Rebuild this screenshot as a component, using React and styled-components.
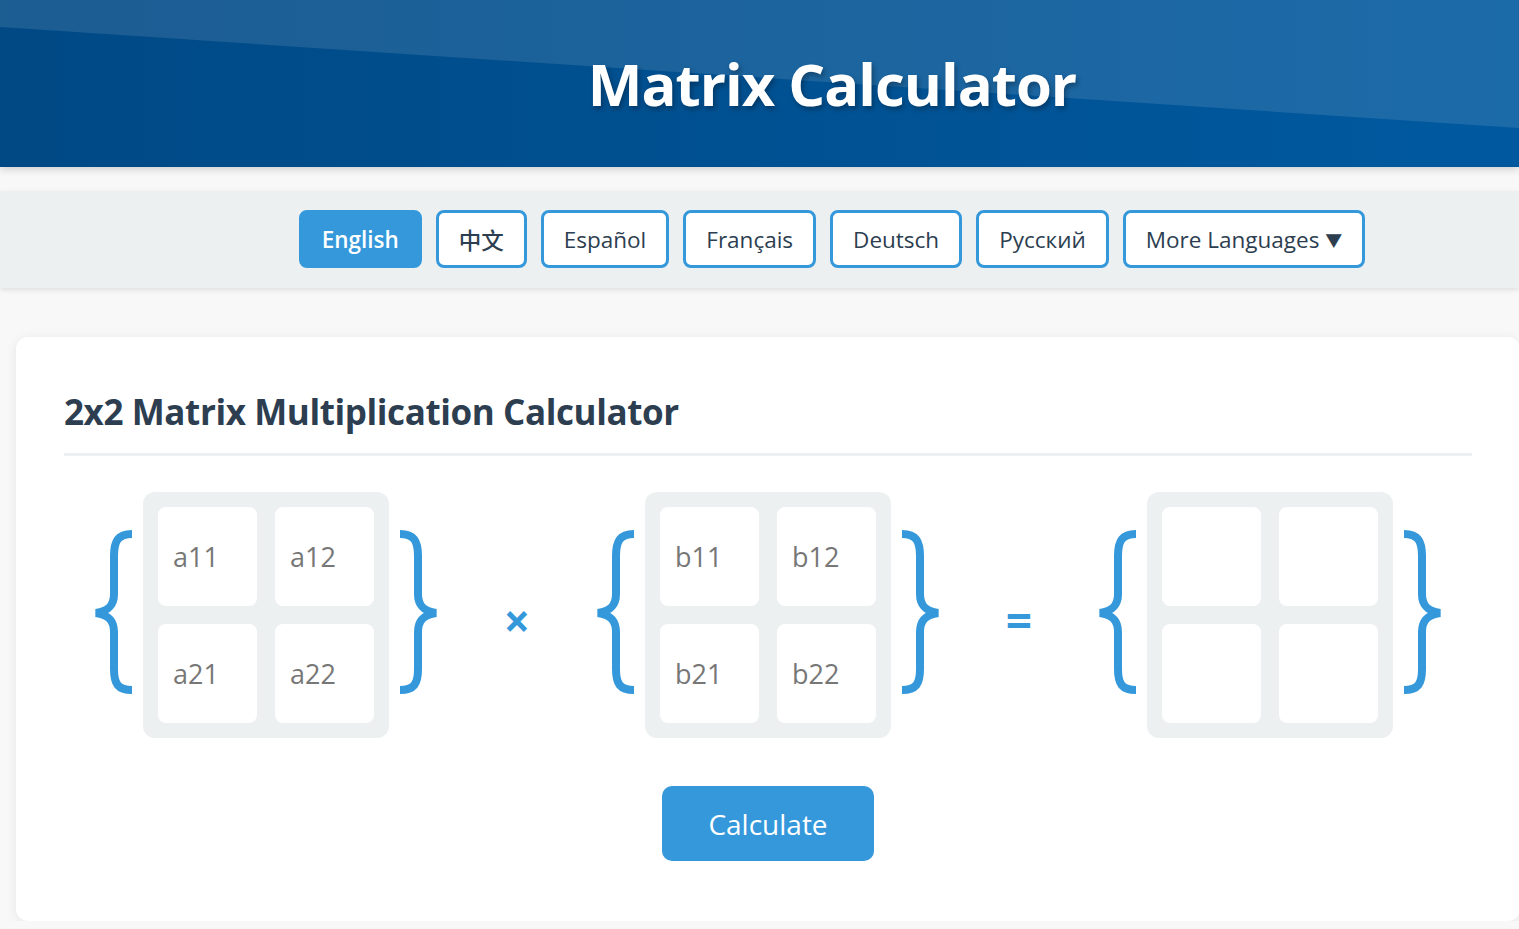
import styled, { createGlobalStyle } from "styled-components";

const GlobalStyle = createGlobalStyle`
    html, body {
        margin: 0;
        padding: 0;
        background: #f8f8f8;
        overflow-x: hidden;
        font-family: 'Open Sans', 'Noto Sans', 'Noto Sans CJK SC', sans-serif;
    }
    * { box-sizing: border-box; }
`

const languages = ["English", "中文", "Español", "Français", "Deutsch", "Русский"];

export default function App(){
    return(
        <>
            <GlobalStyle />
            <Header>
                <HeaderShade />
                <Title>Matrix Calculator</Title>
            </Header>
            <LangBar>
                {languages.map((lang, i) => (
                    <LangButton key={lang} active={i === 0}>{lang}</LangButton>
                ))}
                <LangButton>More Languages <Arrow>▼</Arrow></LangButton>
            </LangBar>
            <Card>
                <CardTitle>2x2 Matrix Multiplication Calculator</CardTitle>
                <Equation>
                    <Matrix cells={["a11", "a12", "a21", "a22"]} />
                    <Operator>×</Operator>
                    <Matrix cells={["b11", "b12", "b21", "b22"]} />
                    <Operator>=</Operator>
                    <Matrix cells={["", "", "", ""]} readOnly />
                </Equation>
                <ButtonRow>
                    <CalcButton>Calculate</CalcButton>
                </ButtonRow>
            </Card>
        </>
    );
}

function Brace({ flip }){
    return(
        <BraceSvg viewBox="0 0 40 168" flip={flip}>
            <path d="M39 6 C25 6 21 13 21 28 L21 66 C21 78 15 83 3 85 C15 87 21 92 21 104 L21 141 C21 156 25 162 39 162" />
        </BraceSvg>
    );
}

function Matrix({ cells, readOnly }){
    return(
        <MatrixGroup>
            <Brace />
            <Grid>
                {cells.map((c, i) => (
                    <Cell key={i} placeholder={c} readOnly={readOnly} />
                ))}
            </Grid>
            <Brace flip />
        </MatrixGroup>
    );
}

const Header = styled.header`
    position: relative;
    height: 167px;
    background: linear-gradient(90deg, #004985 0%, #00599f 100%);
    box-shadow: 0 2px 8px rgba(0,0,0,0.18);
    display: flex;
    align-items: center;
    justify-content: center;
    padding-left: 145px;
    overflow: hidden;
`

const HeaderShade = styled.div`
    position: absolute;
    inset: 0;
    background: rgba(255,255,255,0.11);
    clip-path: polygon(0 0, 100% 0, 100% 128px, 0 27px);
`

const Title = styled.h1`
    position: relative;
    margin: 0;
    color: #ffffff;
    font-family: 'Open Sans', sans-serif;
    font-weight: 700;
    font-size: 58px;
    letter-spacing: -1px;
    text-shadow: 2px 3px 5px rgba(0,0,0,0.3);
`

const LangBar = styled.nav`
    margin-top: 24px;
    background: #ecf0f1;
    box-shadow: 0 2px 5px rgba(0,0,0,0.1);
    padding: 19px 0 20px 145px;
    display: flex;
    justify-content: center;
    gap: 14px;
`

const LangButton = styled.button`
    height: 58px;
    padding: 0 20px;
    border: 3px solid #3498db;
    border-radius: 8px;
    background: ${p => p.active ? "#3498db" : "#ffffff"};
    color: ${p => p.active ? "#ffffff" : "#2c3e50"};
    font-family: 'Open Sans', 'Noto Sans CJK SC', sans-serif;
    font-weight: ${p => p.active ? 600 : 500};
    font-size: 22.5px;
    display: flex;
    align-items: center;
    gap: 6px;
`

const Arrow = styled.span`
    font-size: 17px;
`

const Card = styled.main`
    margin: 49px 0 0 16px;
    width: 1504px;
    background: #ffffff;
    border-radius: 12px;
    box-shadow: 0 2px 12px rgba(0,0,0,0.08);
    padding: 51px 48px 60px;
`

const CardTitle = styled.h2`
    margin: 0;
    padding-bottom: 18px;
    border-bottom: 3px solid #ecf0f1;
    color: #2c3e50;
    font-family: 'Open Sans', sans-serif;
    font-weight: 700;
    font-size: 35px;
    letter-spacing: -0.4px;
`

const Equation = styled.div`
    margin-top: 36px;
    display: flex;
    justify-content: center;
    align-items: center;
    gap: 64px;
`

const MatrixGroup = styled.div`
    display: flex;
    align-items: center;
    gap: 10px;
`

const BraceSvg = styled.svg`
    width: 40px;
    height: 168px;
    margin-top: -6px;
    transform: ${p => p.flip ? "scaleX(-1)" : "none"};

    path {
        fill: none;
        stroke: #3498db;
        stroke-width: 8;
    }
`

const Grid = styled.div`
    width: 246px;
    height: 246px;
    padding: 15px;
    background: #ecf0f1;
    border-radius: 12px;
    display: grid;
    grid-template-columns: 1fr 1fr;
    gap: 18px;
`

const Cell = styled.input`
    width: 100%;
    height: 100%;
    border: none;
    outline: none;
    border-radius: 8px;
    background: #ffffff;
    padding: 0 0 0 15px;
    font-family: 'Open Sans', sans-serif;
    font-size: 27px;
    color: #2c3e50;

    &::placeholder {
        color: #777777;
    }
`

const Operator = styled.span`
    width: 28px;
    margin-top: 10px;
    text-align: center;
    color: #3498db;
    font-family: 'Open Sans', sans-serif;
    font-weight: 700;
    font-size: 46px;
    line-height: 1;
`

const ButtonRow = styled.div`
    margin-top: 48px;
    display: flex;
    justify-content: center;
`

const CalcButton = styled.button`
    width: 212px;
    height: 75px;
    border: none;
    border-radius: 10px;
    background: #3498db;
    color: #ffffff;
    font-family: 'Open Sans', sans-serif;
    font-size: 28px;
`
